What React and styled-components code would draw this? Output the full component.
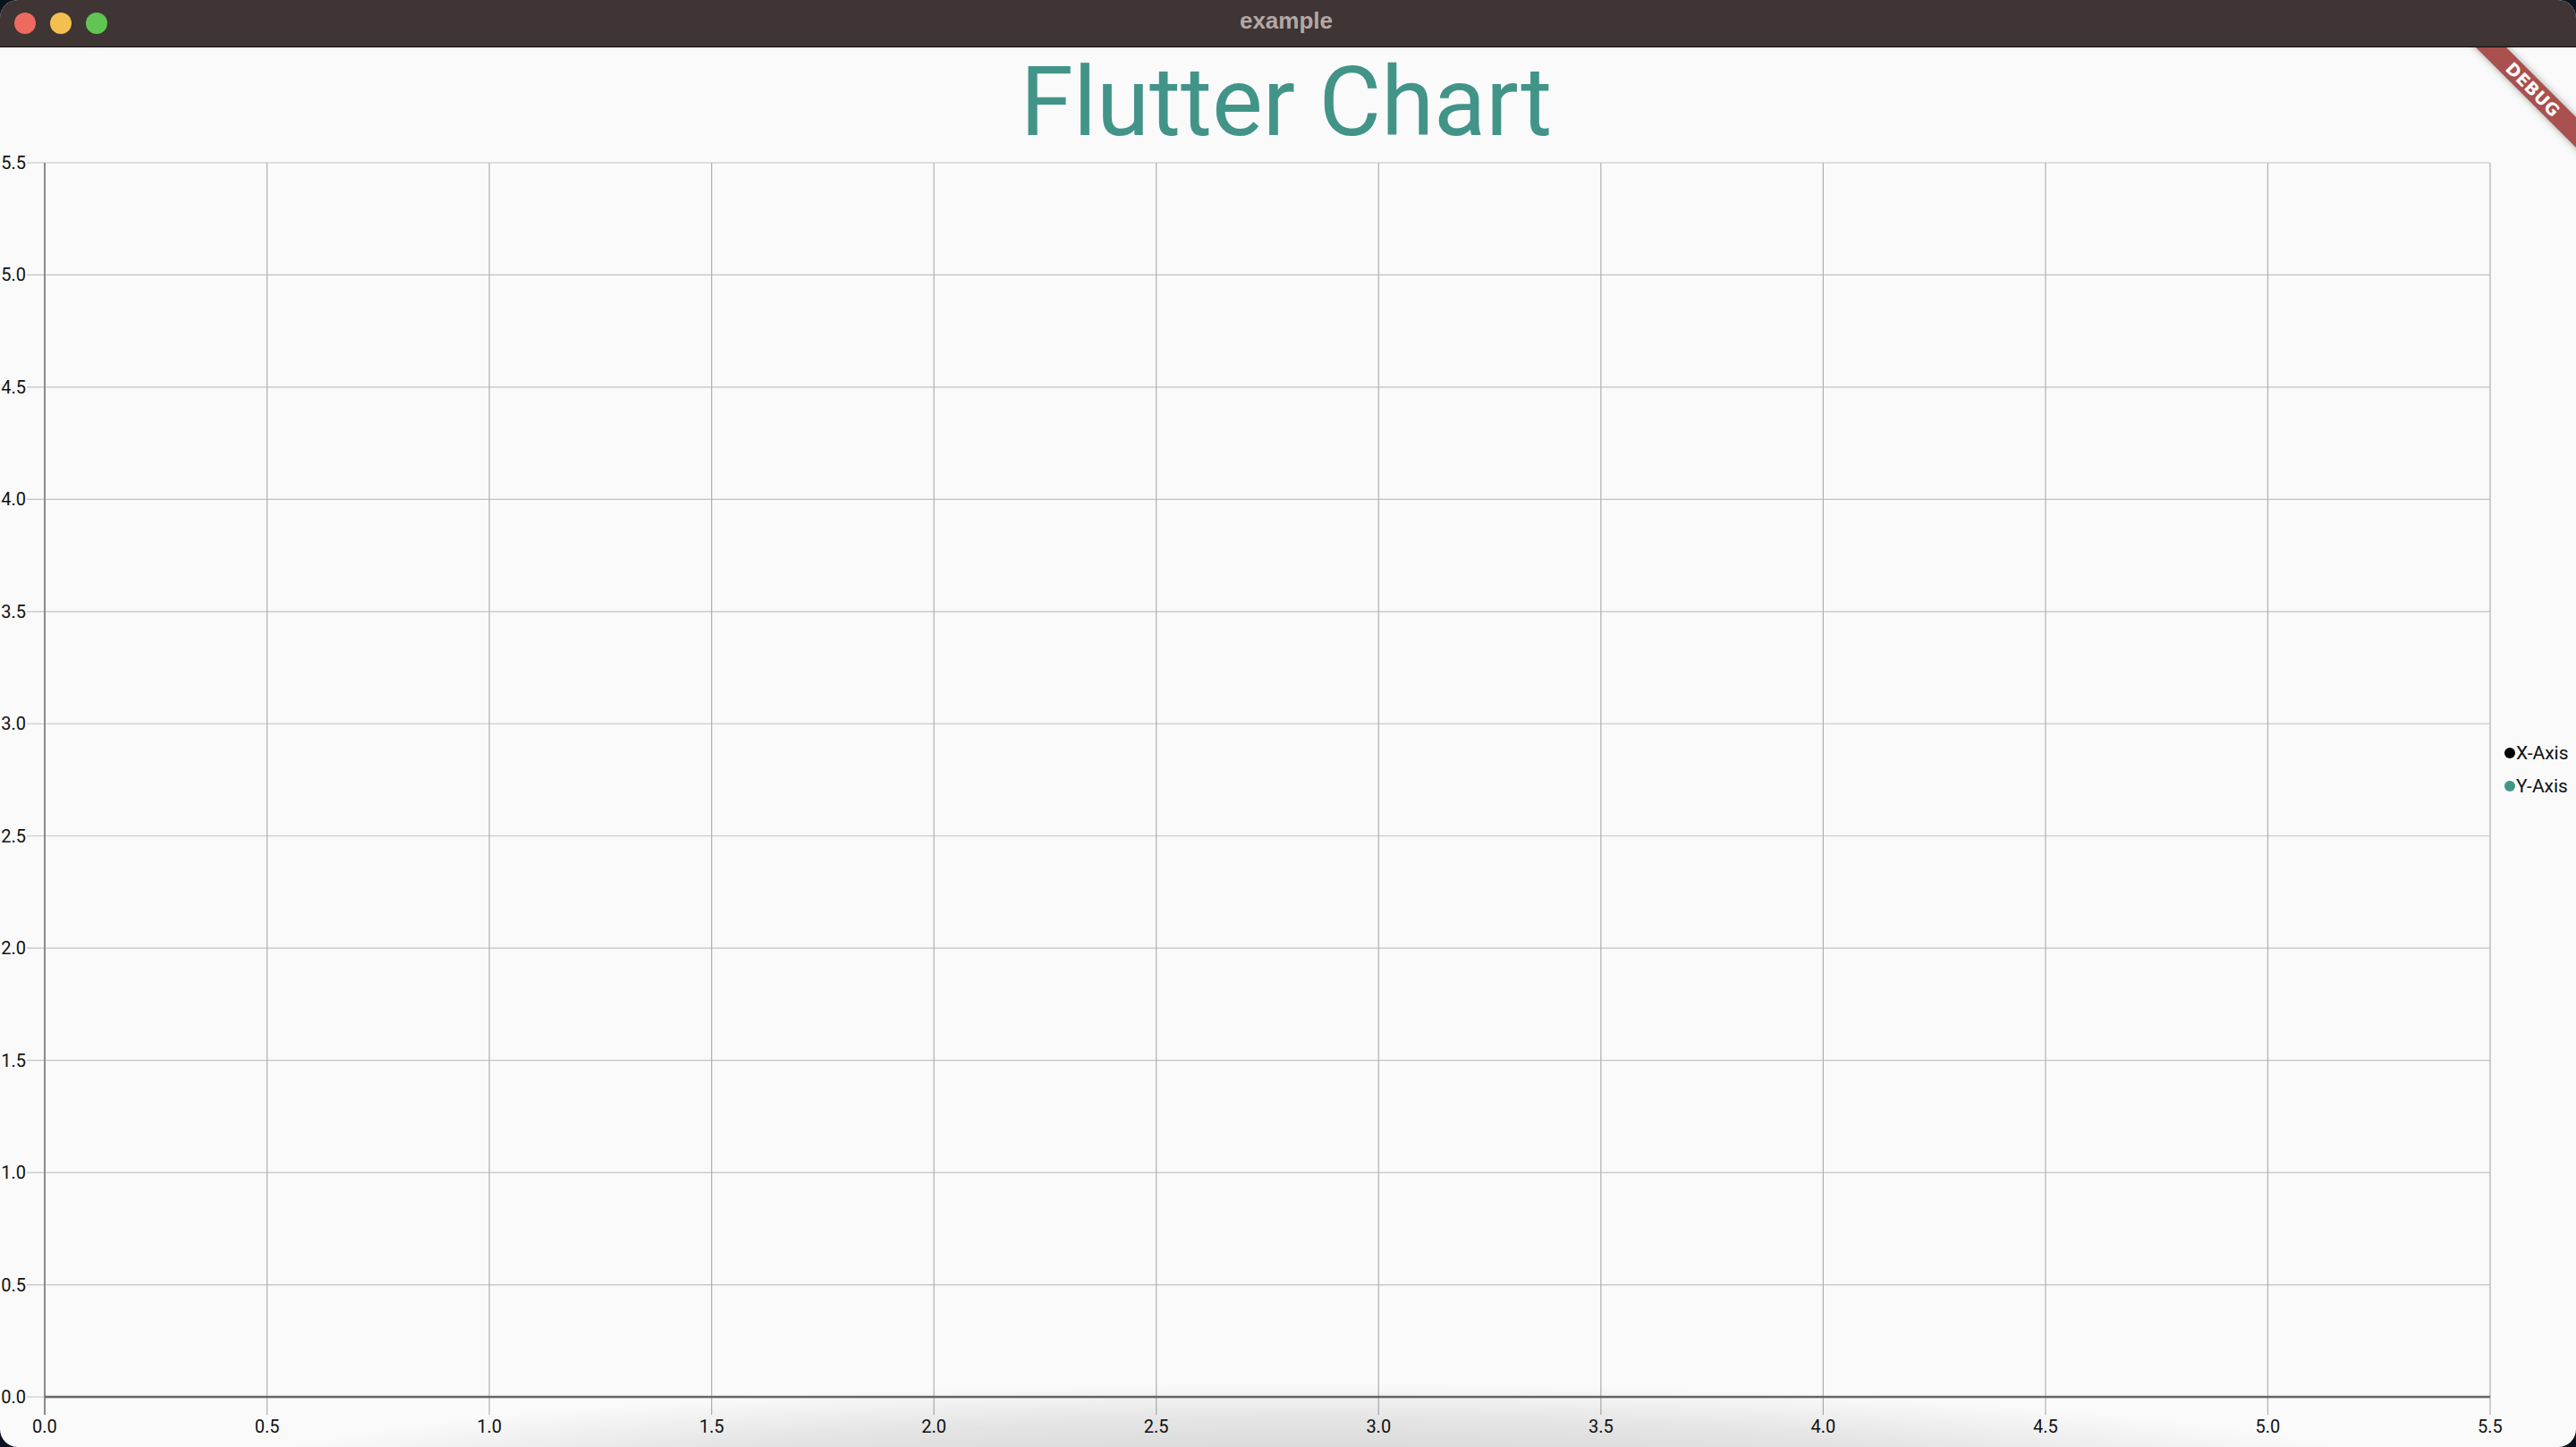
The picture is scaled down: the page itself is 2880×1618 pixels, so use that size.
import React from "react";
import styled, { createGlobalStyle } from "styled-components";

const Global = createGlobalStyle`
  html, body { margin: 0; padding: 0; background: #0b1320; }
  body { width: 2880px; height: 1618px; overflow: hidden; font-family: Roboto, "Liberation Sans", sans-serif; }
`;

const Window = styled.div`
  width: 2880px;
  height: 1618px;
  border-radius: 20px;
  overflow: hidden;
  display: flex;
  flex-direction: column;
  background: #fafafa;
`;

const TitleBar = styled.div`
  height: 52px;
  flex: none;
  background: #3e3534;
  border-bottom: 1px solid #0e0c0c;
  display: grid;
  grid-template-columns: 1fr auto 1fr;
  align-items: center;
`;

const Lights = styled.div`
  display: flex;
  gap: 16px;
  padding-left: 16px;
`;

const Light = styled.span`
  width: 24px;
  height: 24px;
  border-radius: 50%;
  background: ${(p) => p.$color};
`;

const WindowTitle = styled.div`
  font-family: "Liberation Sans", Arial, sans-serif;
  font-weight: 700;
  font-size: 26px;
  color: #b3a8a7;
  margin-left: -4px;
  margin-top: -5px;
`;

const Content = styled.div`
  position: relative;
  flex: 1;
  overflow: hidden;
  display: flex;
  flex-direction: column;
`;

const Heading = styled.h1`
  margin: -1px 0 -16px 0;
  height: 126px;
  line-height: 126px;
  text-align: center;
  font-family: Roboto, "Liberation Sans", sans-serif;
  font-weight: 400;
  font-size: 107px;
  color: #429488;
  padding-right: 4px;
`;

const ChartRow = styled.div`
  display: flex;
  align-items: flex-start;
`;

const Legend = styled.div`
  display: flex;
  flex-direction: column;
  margin-top: 661px;
  margin-left: 0;
`;

const LegendItem = styled.div`
  display: flex;
  align-items: center;
  height: 37px;
  font-family: Roboto, "Liberation Sans", sans-serif;
  font-size: 21px;
  color: #111;
`;

const Dot = styled.span`
  width: 12px;
  height: 12px;
  border-radius: 50%;
  background: ${(p) => p.$color};
  margin-right: 1px;
`;

const Banner = styled.div`
  position: absolute;
  top: 35px;
  right: -72px;
  width: 240px;
  height: 24px;
  transform: rotate(45deg);
  background: #a9514e;
  box-shadow: 0 0 8px rgba(0, 0, 0, 0.35);
  color: #fff;
  font-family: "DejaVu Sans", "Liberation Sans", sans-serif;
  font-weight: 700;
  font-size: 19px;
  line-height: 24px;
  text-align: center;
  letter-spacing: 0.5px;
`;

const DockShade = styled.div`
  position: absolute;
  left: 250px;
  right: 200px;
  bottom: -40px;
  height: 110px;
  pointer-events: none;
  background: radial-gradient(ellipse at 50% 100%, rgba(0, 0, 0, 0.16) 0%, rgba(0, 0, 0, 0.09) 45%, rgba(0, 0, 0, 0) 72%);
`;

const X0 = 50;
const X1 = 2784;
const Y0 = 20; // 5.5
const Y1 = 1400; // 0.0
const ticks = Array.from({ length: 12 }, (_, i) => i * 0.5);
const xPos = (v) => X0 + ((X1 - X0) * v) / 5.5;
const yPos = (v) => Y1 - ((Y1 - Y0) * v) / 5.5;

function Chart() {
  return (
    <svg width="2800" height="1460" viewBox="0 0 2800 1460" style={{ display: "block", flex: "none" }}>
      {ticks.map((t) => (
        <line key={"h" + t} x1={30} x2={X1} y1={yPos(t)} y2={yPos(t)} stroke="#c2c2c2" strokeWidth="1.2" />
      ))}
      {ticks.map((t) => (
        <line key={"v" + t} x1={xPos(t)} x2={xPos(t)} y1={Y0} y2={Y1 + 20} stroke={t === 0 ? "#8a8a8a" : "#b0b0b0"} strokeWidth={t === 0 ? 2 : 1.2} />
      ))}
      <line x1={X0} x2={X1} y1={Y1} y2={Y1} stroke="#666" strokeWidth="2.4" />
      {ticks.map((t) => (
        <text key={"yl" + t} x={29} y={yPos(t) + 7} textAnchor="end" fontFamily="Roboto, 'Liberation Sans', sans-serif" fontSize="20" fill="#111">
          {t.toFixed(1)}
        </text>
      ))}
      {ticks.map((t) => (
        <text key={"xl" + t} x={xPos(t)} y={Y1 + 40} textAnchor="middle" fontFamily="Roboto, 'Liberation Sans', sans-serif" fontSize="20" fill="#111">
          {t.toFixed(1)}
        </text>
      ))}
    </svg>
  );
}

export default function App() {
  return (
    <>
      <Global />
      <Window>
        <TitleBar>
          <Lights>
            <Light $color="#ed6a5e" />
            <Light $color="#f4bf4f" />
            <Light $color="#61c554" />
          </Lights>
          <WindowTitle>example</WindowTitle>
          <div />
        </TitleBar>
        <Content>
          <Heading>Flutter Chart</Heading>
          <ChartRow>
            <Chart />
            <Legend>
              <LegendItem>
                <Dot $color="#000" />
                X-Axis
              </LegendItem>
              <LegendItem>
                <Dot $color="#429488" />
                Y-Axis
              </LegendItem>
            </Legend>
          </ChartRow>
          <Banner>DEBUG</Banner>
          <DockShade />
        </Content>
      </Window>
    </>
  );
}
